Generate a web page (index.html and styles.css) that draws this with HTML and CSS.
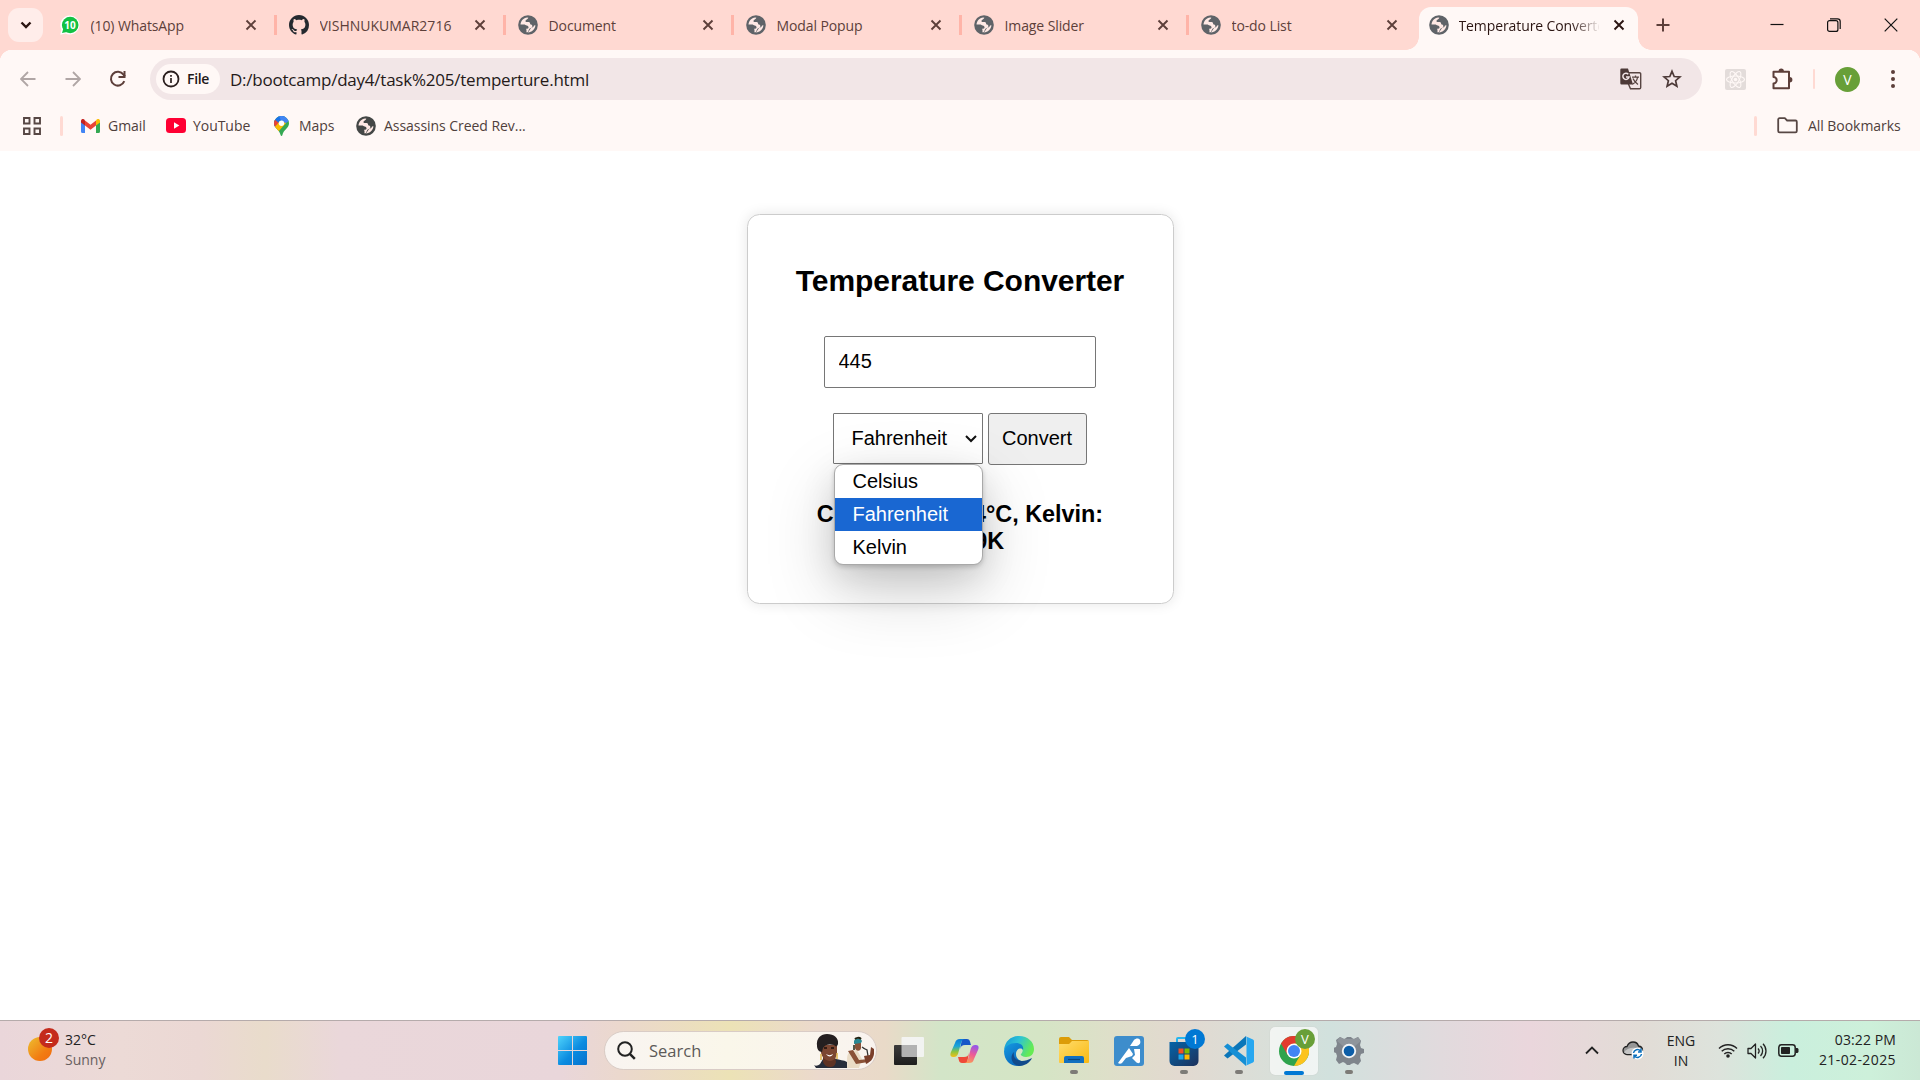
FILE: index.html
```html
<!DOCTYPE html>
<html lang="en">
<head>
<meta charset="utf-8">
<title>Temperature Converter</title>
<link rel="stylesheet" href="styles.css">
</head>
<body>
<svg class="defs" width="0" height="0" aria-hidden="true">
  <symbol id="globe" viewBox="0 0 24 24">
    <circle cx="12" cy="12" r="11.800" fill="currentColor"/>
    <path d="M3 11.500C3.400 7 6.500 3.700 11 3l1.500.2C11.500 5.500 9.500 5 9 6.800c-.2 1.200.6 1.700 1.700 1.700h2c1.500.2 2.100 1.300 1.800 2.700 2 .2 3 1.200 2.700 2.800-.4 1.700-2.400 1.500-3.400 2.500-.9 1-1 2.600-2.100 4.300l-1.700-.1c.5-1.500.3-3-.4-4.200h1.500c1-.2 1.700-1 1.500-2.200-.3-1.400-1.800-1.600-3.100-2L8 11.500z" class="land"/>
    <path d="M12 20.900c4.500 0 8.600-3.500 8.900-8.500l-1.700.2c-.4 1.700-1.700 2.200-3.100 2.800-1.200 1-1.800 2.700-4.100 5.500z" class="land"/>
  </symbol>
  <symbol id="x" viewBox="0 0 12 12"><path d="M1.500 1.500l9 9M10.500 1.500l-9 9" stroke="currentColor" stroke-width="1.900" fill="none"/></symbol>
  <symbol id="github" viewBox="0 0 16 16"><path fill="currentColor" d="M8 0C3.580 0 0 3.580 0 8c0 3.540 2.290 6.530 5.470 7.590.4.070.55-.17.55-.38 0-.19-.01-.82-.01-1.490-2.010.37-2.530-.49-2.690-.94-.09-.23-.48-.94-.82-1.130-.28-.15-.68-.52-.01-.53.63-.01 1.080.58 1.230.82.72 1.210 1.870.87 2.330.66.070-.52.28-.87.51-1.070-1.780-.2-3.640-.89-3.640-3.950 0-.87.31-1.590.82-2.150-.08-.2-.36-1.020.08-2.120 0 0 .67-.21 2.200.82.64-.18 1.320-.27 2-.27s1.360.09 2 .27c1.530-1.040 2.200-.82 2.200-.82.44 1.100.16 1.920.08 2.120.51.56.82 1.270.82 2.150 0 3.070-1.870 3.750-3.650 3.950.29.25.54.73.54 1.480 0 1.070-.01 1.930-.01 2.200 0 .21.15.46.55.38A8.010 8.010 0 0 0 16 8c0-4.420-3.580-8-8-8z"/></symbol>
</svg>

<header class="tabstrip">
  <div class="tab-search"><svg width="12" height="9" viewBox="0 0 12 9"><path d="M1.500 1.500L6 6l4.500-4.500" fill="none" stroke="#2b1512" stroke-width="2.400"/></svg></div>
  <div class="tab t1">
    <span class="wa"><svg width="20" height="20" viewBox="0 0 20 20"><path d="M10 .5a9.500 9.500 0 1 1-4.500 17.900L.3 19.700 1.400 14.500A9.500 9.500 0 0 1 10 .5z" fill="#fff"/><circle cx="10.200" cy="10" r="8.300" fill="#12c143"/><path d="M2 18l1.500-5 3.500 4z" fill="#12c143"/></svg><b>10</b></span>
    <span class="title">(10) WhatsApp</span><svg class="x"><use href="#x"/></svg>
  </div>
  <div class="tab t2"><svg class="fav git"><use href="#github"/></svg><span class="title caps">VISHNUKUMAR2716</span><svg class="x"><use href="#x"/></svg></div>
  <div class="tab t3"><svg class="fav"><use href="#globe"/></svg><span class="title">Document</span><svg class="x"><use href="#x"/></svg></div>
  <div class="tab t4"><svg class="fav"><use href="#globe"/></svg><span class="title">Modal Popup</span><svg class="x"><use href="#x"/></svg></div>
  <div class="tab t5"><svg class="fav"><use href="#globe"/></svg><span class="title">Image Slider</span><svg class="x"><use href="#x"/></svg></div>
  <div class="tab t6"><svg class="fav"><use href="#globe"/></svg><span class="title">to-do List</span><svg class="x"><use href="#x"/></svg></div>
  <div class="tab active"><svg class="fav"><use href="#globe"/></svg><span class="title">Temperature Converter</span><svg class="x"><use href="#x"/></svg></div>
  <svg class="plus" width="14" height="14" viewBox="0 0 14 14"><path d="M7 .5v13M.5 7h13" stroke="#5d3f3a" stroke-width="2"/></svg>
  <div class="window-controls">
    <svg width="14" height="14" viewBox="0 0 14 14"><path d="M.5 6.500h13" stroke="#111" stroke-width="1.200"/></svg>
    <svg width="14" height="14" viewBox="0 0 14 14"><rect x=".6" y="2.600" width="10.300" height="10.800" rx="2" fill="none" stroke="#111" stroke-width="1.200"/><path d="M3 .8h7.500a2.700 2.700 0 0 1 2.700 2.700v7.500" fill="none" stroke="#111" stroke-width="1.200"/></svg>
    <svg width="14" height="14" viewBox="0 0 14 14"><path d="M.7.7l12.600 12.600M13.300.7L.7 13.300" stroke="#111" stroke-width="1.200"/></svg>
  </div>
</header>

<section class="chrome">
  <div class="toolbar">
    <svg class="back" width="16" height="16" viewBox="0 0 16 16"><path d="M15.500 8H1.500M8 1L1 8l7 7" fill="none" stroke="#b0a6a5" stroke-width="1.800"/></svg>
    <svg class="forward" width="16" height="16" viewBox="0 0 16 16"><path d="M.5 8h14M8 1l7 7-7 7" fill="none" stroke="#b0a6a5" stroke-width="1.800"/></svg>
    <svg class="reload" width="18" height="18" viewBox="0 0 18 18"><path d="M15.300 11.200A6.900 6.900 0 1 1 14.500 4.700L16 6.500" fill="none" stroke="#5d3f3a" stroke-width="2"/><path d="M15.500 1v6H9.500" fill="none" stroke="#5d3f3a" stroke-width="2"/></svg>
    <div class="omnibox">
      <div class="chip"><svg width="18" height="18" viewBox="0 0 18 18"><circle cx="9" cy="9" r="7.500" fill="none" stroke="#2b1f1e" stroke-width="1.800"/><path d="M9 8v5M9 5v1.800" stroke="#2b1f1e" stroke-width="1.700"/></svg><span>File</span></div>
      <span class="url">D:/bootcamp/day4/task%205/temperture.html</span>
      <span class="translate"><svg width="22" height="22" viewBox="0 0 22 22"><path d="M8 4.700h11.500a1.200 1.200 0 0 1 1.200 1.200v13.600a1.200 1.200 0 0 1-1.200 1.200h-9L8 15" fill="none" stroke="#574542" stroke-width="1.400"/><path d="M1.500.5H8l5 16H1.500a1.200 1.200 0 0 1-1.200-1.200V1.700A1.200 1.200 0 0 1 1.500.5z" fill="#4d3a38"/><path d="M12 9.200h7M15.500 7.500v1.700M17.500 9.500c-.5 3-2.300 5.200-5 6.700M13 10.500c1 2.500 2.700 4.500 5 6" fill="none" stroke="#574542" stroke-width="1.300"/><path d="M8.300 6.200a3.100 3.100 0 1 0 .7 2.800H6" fill="none" stroke="#f2e6e7" stroke-width="1.500"/></svg></span>
      <svg class="star" width="20" height="20" viewBox="0 0 20 20"><path d="M10 2.300l2.200 5.200 5.700.5-4.300 3.700 1.300 5.600-4.900-3-4.900 3 1.300-5.600L2.100 8l5.700-.5z" fill="none" stroke="#4d3a38" stroke-width="1.700"/></svg>
    </div>
    <svg class="react" width="21" height="21" viewBox="0 0 21 21"><rect width="21" height="21" rx="2" fill="#e3dcda"/><g fill="none" stroke="#fff8f6" stroke-width="1.100"><ellipse cx="10.500" cy="10.500" rx="9" ry="3.500"/><ellipse cx="10.500" cy="10.500" rx="9" ry="3.500" transform="rotate(60 10.500 10.500)"/><ellipse cx="10.500" cy="10.500" rx="9" ry="3.500" transform="rotate(120 10.500 10.500)"/></g><circle cx="10.500" cy="10.500" r="1.800" fill="#fff8f6"/></svg>
    <svg class="puzzle" width="22" height="22" viewBox="0 0 22 22"><path d="M2.500 3.800H18v16.500H2.500V15.500a3.200 3.200 0 0 0 0-6.400z" fill="none" stroke="#5d3f3a" stroke-width="2" stroke-linejoin="round"/><path d="M7.500 3.200a2.700 2.700 0 0 1 5.400 0zM18.700 9a2.700 2.700 0 0 1 0 5.400z" fill="#5d3f3a"/></svg>
    <i class="bar slim"></i>
    <span class="avatar">V</span>
    <svg class="dots" width="6" height="20" viewBox="0 0 6 20"><g fill="#5d3f3a"><circle cx="3" cy="3" r="2"/><circle cx="3" cy="10" r="2"/><circle cx="3" cy="17" r="2"/></g></svg>
  </div>
  <nav class="bookmarks">
    <svg class="apps" width="18" height="18" viewBox="0 0 18 18"><path d="M1 1h5.500v5.500H1zM11.500 1H17v5.500h-5.500zM1 11.500h5.500V17H1zM11.500 11.500H17V17h-5.500z" fill="none" stroke="#574744" stroke-width="1.900"/></svg>
    <i class="bar"></i>
    <svg class="gmail" width="19" height="14" viewBox="0 0 19 14"><path d="M0 2v10.500A1.500 1.500 0 0 0 1.500 14H4V5z" fill="#4285f4"/><path d="M15 5v9h2.500a1.500 1.500 0 0 0 1.500-1.500V2z" fill="#34a853"/><path d="M15 1.500v5l4-3V2c0-2-2-2.600-3.300-1.500z" fill="#fbbc04"/><path d="M4 6.500v-5l5.500 4.200L15 1.500v5l-5.500 4.200z" fill="#ea4335"/><path d="M0 2v1.500l4 3v-5L3.300.5C2-.6 0 0 0 2z" fill="#c5221f"/></svg>
    <span class="b1">Gmail</span>
    <svg class="yt" width="20" height="15" viewBox="0 0 20 15"><rect width="20" height="15" rx="3.500" fill="#ff0033"/><path d="M8 4.300v6.400l5.400-3.200z" fill="#fff"/></svg>
    <span class="b2">YouTube</span>
    <svg class="maps" width="15" height="20" viewBox="0 0 15 20"><defs><clipPath id="pin"><path d="M7.500 0A7.400 7.400 0 0 0 0 7.400c0 4.600 5.500 6 6.600 11.600.2 1.200 1.600 1.200 1.800 0C9.500 13.400 15 12 15 7.400A7.400 7.400 0 0 0 7.500 0z"/></clipPath></defs><g clip-path="url(#pin)"><path d="M0 0h15v20H0z" fill="#34a853"/><path d="M-1 13L11 0H0v10z" fill="#1a73e8"/><path d="M5 0h10v5L9 9z" fill="#4285f4"/><path d="M0 3l5 4-5 6z" fill="#ea4335"/><path d="M0 12L6 5l6 2-8 9z" fill="#fbbc04"/></g><circle cx="7.500" cy="7.300" r="2.700" fill="#fff"/></svg>
    <span class="b3">Maps</span>
    <svg class="fav dark"><use href="#globe"/></svg>
    <span class="b4">Assassins Creed Rev...</span>
    <i class="bar push"></i>
    <svg class="folder" width="21" height="17" viewBox="0 0 21 17"><path d="M1.200 2.500A1.300 1.300 0 0 1 2.500 1.200h5.300l2.300 2.300h8.400a1.300 1.300 0 0 1 1.300 1.300v9.200a1.300 1.300 0 0 1-1.300 1.300h-16A1.300 1.300 0 0 1 1.200 14z" fill="none" stroke="#574744" stroke-width="1.800"/></svg>
    <span class="b5">All Bookmarks</span>
  </nav>
</section>

<main class="page">
  <div class="card">
    <h2>Temperature Converter</h2>
    <input class="value" type="text" value="445">
    <div class="controls">
      <div class="select">Fahrenheit
        <svg width="12" height="8" viewBox="0 0 12 8"><path d="M1 1l5 5 5-5" fill="none" stroke="#111" stroke-width="2"/></svg>
        <ul class="options"><li>Celsius</li><li class="on">Fahrenheit</li><li>Kelvin</li></ul>
      </div>
      <button class="convert">Convert</button>
    </div>
    <h3>Celsius: 229.44°C, Kelvin: 502.59K</h3>
  </div>
</main>

<footer class="taskbar">
  <div class="weather">
    <span class="sun"><b>2</b></span>
    <div class="two"><span>32°C</span><span class="muted">Sunny</span></div>
  </div>
  <div class="apps-row">
    <svg class="win" width="29" height="29" viewBox="0 0 29 29"><defs><linearGradient id="w" x1="0" y1="0" x2="29" y2="29" gradientUnits="userSpaceOnUse"><stop stop-color="#4fd3fb"/><stop offset=".55" stop-color="#0b8be0"/><stop offset="1" stop-color="#0670cc"/></linearGradient></defs><path d="M0 1a1 1 0 0 1 1-1h13v14H0zM15 0h13a1 1 0 0 1 1 1v13H15zM0 15h14v14H1a1 1 0 0 1-1-1zM15 15h14v13a1 1 0 0 1-1 1H15z" fill="url(#w)"/></svg>
    <div class="search">
      <svg width="19" height="19" viewBox="0 0 19 19"><circle cx="8" cy="8" r="6.800" fill="none" stroke="#222" stroke-width="2"/><path d="M12.800 12.800l5 5" stroke="#222" stroke-width="2.500"/></svg>
      <span>Search</span>
      <svg class="people" width="60" height="34" viewBox="0 0 60 34">
        <path d="M0 31c1 1 4 1 6-1l3-5 13 0c3 1 8 1 11 3v6H2z" fill="#272d3a"/><path d="M9 22h12l1 6c-1 4-3 5-6 5s-6-2-7-5z" fill="#5e3324"/><path d="M7 11h16v7c0 5-3 9-7 9s-9-4-9-9z" fill="#7b4631"/><path d="M3 12C2 4 7 0 13 0c7 0 12 4 11 10-1 3-2 3-4 1-4-1-9-1-11 3l-1 4c-3 0-5-3-5-6z" fill="#241f20"/><path d="M12 20c2 1.500 5 1.500 7 0-1 3-5 3.500-7 0z" fill="#fff"/><path d="M10 14h3M17 14h3" stroke="#1b0e0a" stroke-width="1.300"/><path d="M7 20v6M23 19v6" stroke="#dfb44c" stroke-width="1.500"/>
        <path d="M33 34c1-5-1-9 1-14 2-3 6-4 9-4l5 9-3 9z" fill="#eadcc6"/><path d="M34 17l5-1 6 10 9-1v3l-12 2z" fill="#8a5238"/><path d="M41 8h6v6c0 3-5 4-6 0z" fill="#8a5238"/><path d="M40 7c1-3 6-4 8 0l-1 2-7 1z" fill="#2a8792"/><path d="M41 5c1-1 4-2 6 0" stroke="#221" stroke-width="2" fill="none"/><path d="M40 11v5" stroke="#221" stroke-width="1.500"/><path d="M49 14l4 2 1 6M48 13l3 2" stroke="#333" stroke-width="1.300" fill="none"/><path d="M50 22l6-1 1-8 3 2c1 7-2 13-8 15z" fill="#7a3f2b"/>
      </svg>
    </div>
    <svg class="taskview" width="30" height="28" viewBox="0 0 30 28"><defs><linearGradient id="tv" x1="0" y1="0" x2="0" y2="1"><stop stop-color="#3b3b3b"/><stop offset="1" stop-color="#1e1e1e"/></linearGradient></defs><rect y="8" width="23" height="20" rx="1" fill="url(#tv)"/><path d="M8.500 0H29a1 1 0 0 1 1 1v18a1 1 0 0 1-1 1h-6V8H7.500V1a1 1 0 0 1 1-1z" fill="#f4f4f4" opacity=".92"/><path d="M7.500 8H23v12H8.500a1 1 0 0 1-1-1z" fill="#b2b2b2"/></svg>
    <div class="app"><svg width="29" height="26" viewBox="0 0 29 26"><defs><linearGradient id="c1" x1="0" y1="0" x2="0" y2="1"><stop stop-color="#0b7bd8"/><stop offset=".4" stop-color="#19a5d8"/><stop offset=".7" stop-color="#8bc53f"/><stop offset="1" stop-color="#f4c016"/></linearGradient><linearGradient id="c2" x1=".6" y1="0" x2=".3" y2="1"><stop stop-color="#9656e8"/><stop offset=".5" stop-color="#ee5b96"/><stop offset="1" stop-color="#fb9c55"/></linearGradient></defs><path d="M12 1h5c3 0 3 3 4 6h-6c-3 0-4 1-5 4z" fill="#1656c8"/><path d="M17 25h-5c-3 0-3-3-4-6h6c3 0 4-1 5-4z" fill="#ee4938"/><path d="M5 5c1-3 2-4 5-4h5c-2 0-3 1-4 4L8 16c-1 2-2 3-4 3H3c-3 0-3-3-2-5z" fill="url(#c1)"/><path d="M24 21c-1 3-2 4-5 4h-5c2 0 3-1 4-4l3-11c1-2 2-3 4-3h1c3 0 3 3 2 5z" fill="url(#c2)"/></svg></div>
    <div class="app"><svg width="30" height="30" viewBox="0 0 30 30"><defs><linearGradient id="e1" x1="0" y1="0" x2="1" y2=".4"><stop stop-color="#1292d8"/><stop offset=".5" stop-color="#2cc3d5"/><stop offset="1" stop-color="#66eb54"/></linearGradient><linearGradient id="e2" x1="0" y1="0" x2=".7" y2="1"><stop stop-color="#159be2"/><stop offset="1" stop-color="#0761b8"/></linearGradient></defs><path d="M0 14C1 5 7 0 15 0c9 0 15 6 15 13 0 5-3 8-8 8-4 0-6-2-5-3 3-3 2-8-3-8C7 10 2 12 0 14z" fill="url(#e1)"/><path d="M0 15C1 10 6 7 12 7c5 0 8 3 7 7-2-3-7-1-7 4 0 6 6 8 10 8-2 3-5 4-8 4C6 30 0 24 0 15z" fill="url(#e2)"/><path d="M10 16c-2 8 7 12 18 6-2 5-8 8-13 8C8 29 5 21 10 16z" fill="#114a8b"/></svg></div>
    <div class="app"><svg width="30" height="27" viewBox="0 0 30 27"><defs><linearGradient id="fo" x1="0" y1="0" x2="1" y2="1"><stop stop-color="#ffdc6c"/><stop offset="1" stop-color="#f9b911"/></linearGradient></defs><path d="M0 2a2 2 0 0 1 2-2h8l3 3h15a2 2 0 0 1 2 2v5H0z" fill="#dc9c08"/><path d="M0 7h10l3-3h17v21a1 1 0 0 1-1 1H1a1 1 0 0 1-1-1z" fill="url(#fo)"/><path d="M5 26v-5a2 2 0 0 1 2-2h16a2 2 0 0 1 2 2v5z" fill="#1270c0"/><path d="M9 22.500h12" stroke="#0b477e" stroke-width="1.200"/></svg><i></i></div>
    <div class="app"><svg width="30" height="30" viewBox="0 0 30 30"><rect width="30" height="30" rx="3" fill="#3d8dcc"/><path d="M16 10l4-6c2-2 5-2 6 0 1 3 0 5-3 6z" fill="#fff"/><path d="M15 12l4 6-1 2-6 2-4 5c-1 1-3 1-4 0z" fill="#fff"/><path d="M20 13h6v13c-1 2-3 1-4 0l-4-4 3-3z" fill="#fff"/></svg></div>
    <div class="app"><svg width="30" height="30" viewBox="0 0 30 30"><defs><linearGradient id="st" x1="0" y1="0" x2="1" y2="1"><stop stop-color="#0564a8"/><stop offset="1" stop-color="#1d315b"/></linearGradient></defs><path d="M8 6V3a1 1 0 0 1 1-1h11v4" fill="none" stroke="#27b5ee" stroke-width="2"/><path d="M.5 6h29v19a5 5 0 0 1-5 5h-19a5 5 0 0 1-5-5z" fill="url(#st)"/><path d="M9.500 12.500h5v5h-5z" fill="#f25022"/><path d="M15.500 12.500h5v5h-5z" fill="#7fba00"/><path d="M9.500 18.500h5v5h-5z" fill="#1ca7ea"/><path d="M15.500 18.500h5v5h-5z" fill="#ffb900"/></svg><b class="badge blue">1</b><i></i></div>
    <div class="app"><svg width="30" height="30" viewBox="0 0 30 30"><path d="M22 0v8.500L3.500 22.500 0 19.500z" fill="#0b76b9"/><path d="M0 10.500l3.500-3L22 21.500V30z" fill="#158fd5"/><path d="M21 0l8 3.500c.7.400 1 .8 1 1.500v20c0 .7-.3 1.100-1 1.500L21 30c1-.4 1.500-1 1.500-2V2c0-1-.5-1.600-1.500-2z" fill="#27a7f0"/></svg><i></i></div>
    <div class="app current"><svg width="30" height="30" viewBox="0 0 30 30"><circle cx="15" cy="15" r="15" fill="#2fa34d"/><path d="M2 7.500A15 15 0 0 1 28 7.500H15L8.500 18.700z" fill="#e33b2e"/><path d="M28 7.500A15 15 0 0 1 15 30l6.500-11.200L15 7.500z" fill="#fcc31d"/><circle cx="15" cy="15" r="7.500" fill="#fff"/><circle cx="15" cy="15" r="6" fill="#4285f4"/></svg><b class="badge green">V</b><i></i></div>
    <div class="app"><svg width="30" height="30" viewBox="0 0 30 30"><path d="M6 1l4 2 2-1 1-1h4l1 1 2 1 4-2 3 4-1 4 1 3 3 1v4l-3 1-1 3 1 4-3 4-4-2-3 1-1 1h-3l-2-2-2-1-4 2-3-4 1-4-1-3-3-1v-4l3-1 1-3-1-4z" fill="#7f858c"/><path d="M6 1l4 2 10 0 4-2 3 4-12 10L3 5z" fill="#8f959b"/><circle cx="15" cy="15" r="7.200" fill="#f1f4f6"/><circle cx="15" cy="15" r="5.300" fill="#0d5ea8"/></svg><i></i></div>
  </div>
  <div class="tray">
    <svg class="up" width="14" height="9" viewBox="0 0 14 9"><path d="M1 7.500L7 1.500l6 6" fill="none" stroke="#222" stroke-width="1.800"/></svg>
    <svg class="cloud" width="22" height="19" viewBox="0 0 22 19"><path d="M5 13.500a4 4 0 0 1 0-8c1.200-3 3.300-4.500 6-4.500s4.800 1.500 5.500 4c2.500.3 4 2 4 4.300 0 2.500-2 4.200-4 4.200z" fill="#969696" stroke="#222" stroke-width="1.300"/><path d="M2 11.500C4 8 9 6 14 7l-5 6H5z" fill="#c5c5c5"/><circle cx="15.500" cy="12.500" r="6" fill="#fff"/><path d="M11.500 12a4 4 0 0 1 7-2M19.500 13a4 4 0 0 1-7 2M19 7.500V11h-3M12 17.500V14.300h3" fill="none" stroke="#0b70bd" stroke-width="1.500"/></svg>
    <div class="two lang"><span>ENG</span><span>IN</span></div>
    <svg class="wifi" width="20" height="15" viewBox="0 0 20 15"><path d="M1 5.500a12.700 12.700 0 0 1 18 0M3.700 8.300a9 9 0 0 1 12.600 0M6.300 11a5.200 5.200 0 0 1 7.400 0" fill="none" stroke="#222" stroke-width="1.400"/><circle cx="10" cy="13" r="1.800" fill="#222"/></svg>
    <svg class="sound" width="21" height="16" viewBox="0 0 21 16"><path d="M1 5.500h3L8.500 1v14L4 10.500H1z" fill="none" stroke="#222" stroke-width="1.300" stroke-linejoin="round"/><path d="M11 5.500a3.700 3.700 0 0 1 0 5M13.500 3a7 7 0 0 1 0 10M16 .8a10.200 10.200 0 0 1 0 14.400" fill="none" stroke="#222" stroke-width="1.300"/></svg>
    <svg class="battery" width="21" height="13" viewBox="0 0 21 13"><rect x=".8" y=".8" width="16.400" height="11.400" rx="2.700" fill="none" stroke="#222" stroke-width="1.500"/><rect x="3" y="3" width="9" height="7" rx=".8" fill="#222"/><path d="M18 4h1.500l1 1v3l-1 1H18z" fill="#222"/></svg>
    <div class="two clock"><span>03:22 PM</span><span class="date">21-02-2025</span></div>
  </div>
</footer>
</body>
</html>
```
FILE: styles.css
```css
* { box-sizing: border-box; }
body { margin: 0; width: 1920px; height: 1080px; overflow: hidden; display: flex; flex-direction: column; background: #fff; font: 14px "Open Sans", "Noto Sans", sans-serif; }
svg { display: block; flex: none; }
.defs { position: absolute; }

/* Tab strip */
.tabstrip { height: 50px; flex: none; display: flex; align-items: center; background: #ffd9d2; color: #5d3f3a; padding-left: 8px; }
.tab-search { width: 35px; height: 34px; border-radius: 11px; background: #ffedea; display: grid; place-items: center; }
.tab { height: 20px; flex: none; display: flex; align-items: center; padding: 0 17px 0 12px; border-right: 3px solid #ffb4a8; }
.t1 { width: 234px; padding-left: 17px; }
.t2 { width: 229px; }
.t3, .t4 { width: 228px; }
.t5 { width: 227px; }
.t6 { width: 227px; border-right: 0; padding-right: 18px; }
.fav { width: 20px; height: 20px; padding: 0; color: #5f6368; }
.land { fill: #ffe9e5; }
.title { flex: 1; margin-left: 10.500px; letter-spacing: -.1px; white-space: nowrap; overflow: hidden; line-height: 20px; padding-top: 1px; }
.title.caps { letter-spacing: 0; }
.git { color: #24292f; }
.dark { color: #444746; }
.x { width: 12px; height: 12px; }
.wa { width: 20px; height: 20px; position: relative; }
.wa b { position: absolute; inset: 0; font-size: 10px; line-height: 20px; text-align: center; color: #fff; }
.active { position: relative; width: 219px; height: 43px; margin: 7px 0 0 3px; padding: 0 14px 7px 10px; border: 0; border-radius: 12px 12px 0 0; background: #fff8f6; color: #2b1512; }
.active::before, .active::after { content: ""; position: absolute; bottom: 0; width: 13px; height: 13px; }
.active::before { left: -13px; background: radial-gradient(circle at 0 0, transparent 12.500px, #fff8f6 13px); }
.active::after { right: -13px; background: radial-gradient(circle at 100% 0, transparent 12.500px, #fff8f6 13px); }
.active .title { flex: none; width: 140px; margin-left: 9.500px; margin-right: 14px; -webkit-mask-image: linear-gradient(90deg, #000 112px, transparent 142px); mask-image: linear-gradient(90deg, #000 112px, transparent 142px); }
.plus { margin-left: 18px; }
.window-controls { display: flex; gap: 43px; margin-left: auto; padding-right: 22px; }

/* Toolbar and bookmarks */
.chrome { height: 101px; flex: none; background: radial-gradient(circle at 12px 12px, #fff8f6 12px, #ffd9d2 12.500px) 0 0 / 12px 12px no-repeat, radial-gradient(circle at 0 12px, #fff8f6 12px, #ffd9d2 12.500px) 100% 0 / 12px 12px no-repeat, #fff8f6; }
.toolbar { height: 58px; display: flex; align-items: center; padding-left: 20px; }
.forward { margin-left: 29px; }
.reload { margin-left: 28px; }
.omnibox { width: 1552px; height: 42px; margin-left: 23px; border-radius: 21px; background: #f2e6e7; display: flex; align-items: center; padding: 0 20px 0 6px; }
.chip { width: 64px; height: 30px; border-radius: 15px; background: #fff8f6; display: flex; align-items: center; gap: 7px; padding-left: 6px; font-size: 14px; font-weight: 600; letter-spacing: -.3px; color: #1f1a1a; }
.chip span { margin-top: -2px; }
.url { margin-left: 10px; font-size: 17px; letter-spacing: -.23px; color: #251a19; }
.translate { margin-left: auto; }
.star { margin-left: 20px; }
.react { margin-left: 23px; }
.puzzle { margin-left: 25px; }
.bar { width: 3px; height: 20px; border-radius: 2px; background: #ffdad3; }
.slim { width: 2px; margin-left: 20px; }
.avatar { width: 25px; height: 25px; margin-left: 20px; border-radius: 50%; background: #689f38; color: #fff; font-size: 14px; line-height: 25px; text-align: center; }
.dots { margin-left: 30px; }
.bookmarks { height: 35px; display: flex; align-items: center; padding: 0 18px 0 23px; color: #4f3f3c; letter-spacing: -.05px; white-space: nowrap; }
.bookmarks span { margin-top: -1px; }
.bookmarks .bar { margin-left: 19px; }
.gmail { margin-left: 18px; }
.b1 { width: 39px; margin-left: 8px; }
.yt { margin-left: 19px; }
.b2 { width: 59px; margin-left: 7px; }
.maps { margin-left: 22px; }
.b3 { width: 37px; margin-left: 10px; }
.bookmarks .fav { margin-left: 20px; }
.b4 { margin-left: 8px; }
.bookmarks .push { margin-left: auto; }
.folder { margin-left: 20px; }
.b5 { width: 94px; margin-left: 10px; }

/* Converter page */
.page { flex: 1; font-family: "Liberation Sans", Arial, sans-serif; color: #000; }
.card { width: 427px; height: 390px; margin: 63px 0 0 747px; padding: 48px 50px 0 49px; border: 1px solid #ccc; border-radius: 12.500px; box-shadow: 0 0 12.500px rgba(0,0,0,.1); display: flex; flex-direction: column; align-items: center; }
h2 { margin: 0; font-size: 30px; line-height: 36px; letter-spacing: -.05px; white-space: nowrap; }
.value { width: 272px; height: 52px; margin: 37px 1px 25px 0; padding: 0 14px 2px; border: 1px solid #767676; border-radius: 2px; background: #fff; font: 20px "Liberation Sans", Arial, sans-serif; color: #000; }
.controls { display: flex; gap: 5px; margin-right: 1px; }
.select { position: relative; width: 150px; height: 51px; border: 1px solid #767676; border-radius: 1px; padding: 0 5px 0 18px; display: flex; justify-content: space-between; align-items: center; font-size: 20px; }
.convert { width: 99px; height: 52px; padding: 0 0 2px; border: 1px solid #767676; border-radius: 3px; background: #efefef; font: 20px "Liberation Sans", Arial, sans-serif; color: #000; }
.options { position: absolute; left: 0; top: 50px; width: 149px; margin: 0; padding: 0; list-style: none; border: 1px solid #a9a9a9; border-radius: 9px; background: #fff; overflow: hidden; box-shadow: 0 25px 70px rgba(0,0,0,.18), 0 12px 35px rgba(0,0,0,.12), 0 2px 5px rgba(0,0,0,.18); }
.options li { height: 33px; line-height: 32px; padding-left: 18px; }
.options .on { background: #1967d2; color: #fff; }
h3 { width: 300px; margin: 36px 0 0; font-size: 23.400px; line-height: 27px; text-align: center; }

/* Taskbar */
.taskbar { height: 60px; flex: none; display: flex; position: relative; align-items: center; border-top: 1px solid #b5abab; background: linear-gradient(90deg, #ead6da 0, #ecdad6 120px, #ebd8d4 200px, #e9dccb 265px, #ead7da 340px, #e9d6da 560px, #ebd8cd 620px, #ece2b6 730px, #ebd9cd 820px, #e9dac8 885px, #d3e5c8 940px, #d5e5c5 1040px, #dedfc9 1110px, #e2d9d0 1180px, #d9dfd9 1270px, #d1e1dd 1330px, #e1dadd 1440px, #ead6dc 1530px, #e2dcd6 1640px, #dde3dc 1720px, #caefdd 1790px, #cdf0da 1870px, #cbe8d5 1920px); color: #222; }
.weather { width: 558px; display: flex; padding-left: 28px; align-items: center; }
.sun { position: relative; width: 24px; height: 24px; border-radius: 50%; background: linear-gradient(135deg, #edbf30, #f27c12 65%, #f16b10); margin-top: -4px; }
.sun b { position: absolute; left: 11px; top: -9px; width: 20px; height: 20px; border-radius: 50%; background: #c42b1c; color: #fff; font-weight: 400; font-size: 14px; line-height: 20px; text-align: center; }
.two { display: flex; flex-direction: column; line-height: 20px; letter-spacing: 0; white-space: nowrap; margin-top: -2px; }
.weather .two { margin-left: 13px; }
.muted { color: #686060; }
.apps-row { display: flex; align-items: center; }
.search { width: 273px; height: 39px; margin-left: 17px; border: 1px solid #d9ccc6; border-radius: 20px; background: linear-gradient(90deg, #f9f4f1, #faf7ea 45%, #f9f3ef); display: flex; align-items: center; padding-left: 12px; font-size: 16.500px; color: #5d5a58; overflow: hidden; }
.search span { margin-left: 13px; }
.people { margin: 0 2px 0 auto; }
.taskview { margin: 0 28px 0 17px; }
.app { position: relative; width: 48px; height: 48px; margin-right: 7px; display: grid; place-items: center; border-radius: 5px; }
.taskview + .app { margin-left: -12px; }
.app i { position: absolute; left: 20px; bottom: 1px; width: 8px; height: 4px; border-radius: 2px; background: #7d7b77; }
.current { background: rgba(255,255,255,.65); box-shadow: 0 0 1px #bbb; }
.app.current i { left: 14px; bottom: 0; width: 20px; background: #0078d4; }
.badge { position: absolute; left: 25px; top: 2px; width: 20px; height: 20px; border-radius: 50%; color: #fff; font-weight: 400; font-size: 13px; line-height: 20px; text-align: center; }
.blue { background: #0078d4; }
.green { background: #689f38; }
.tray { display: flex; align-items: center; margin-left: auto; padding-right: 24px; }
.cloud { margin-left: 23px; }
.lang { width: 30px; margin-left: 22px; margin-top: 0; text-align: center; }
.wifi { margin-left: 22px; }
.sound { margin-left: 9px; }
.battery { margin-left: 10px; }
.clock { width: 78px; margin-left: 19px; letter-spacing: .1px; }
.clock span { align-self: flex-end; }
.clock .date { letter-spacing: .4px; }
```
